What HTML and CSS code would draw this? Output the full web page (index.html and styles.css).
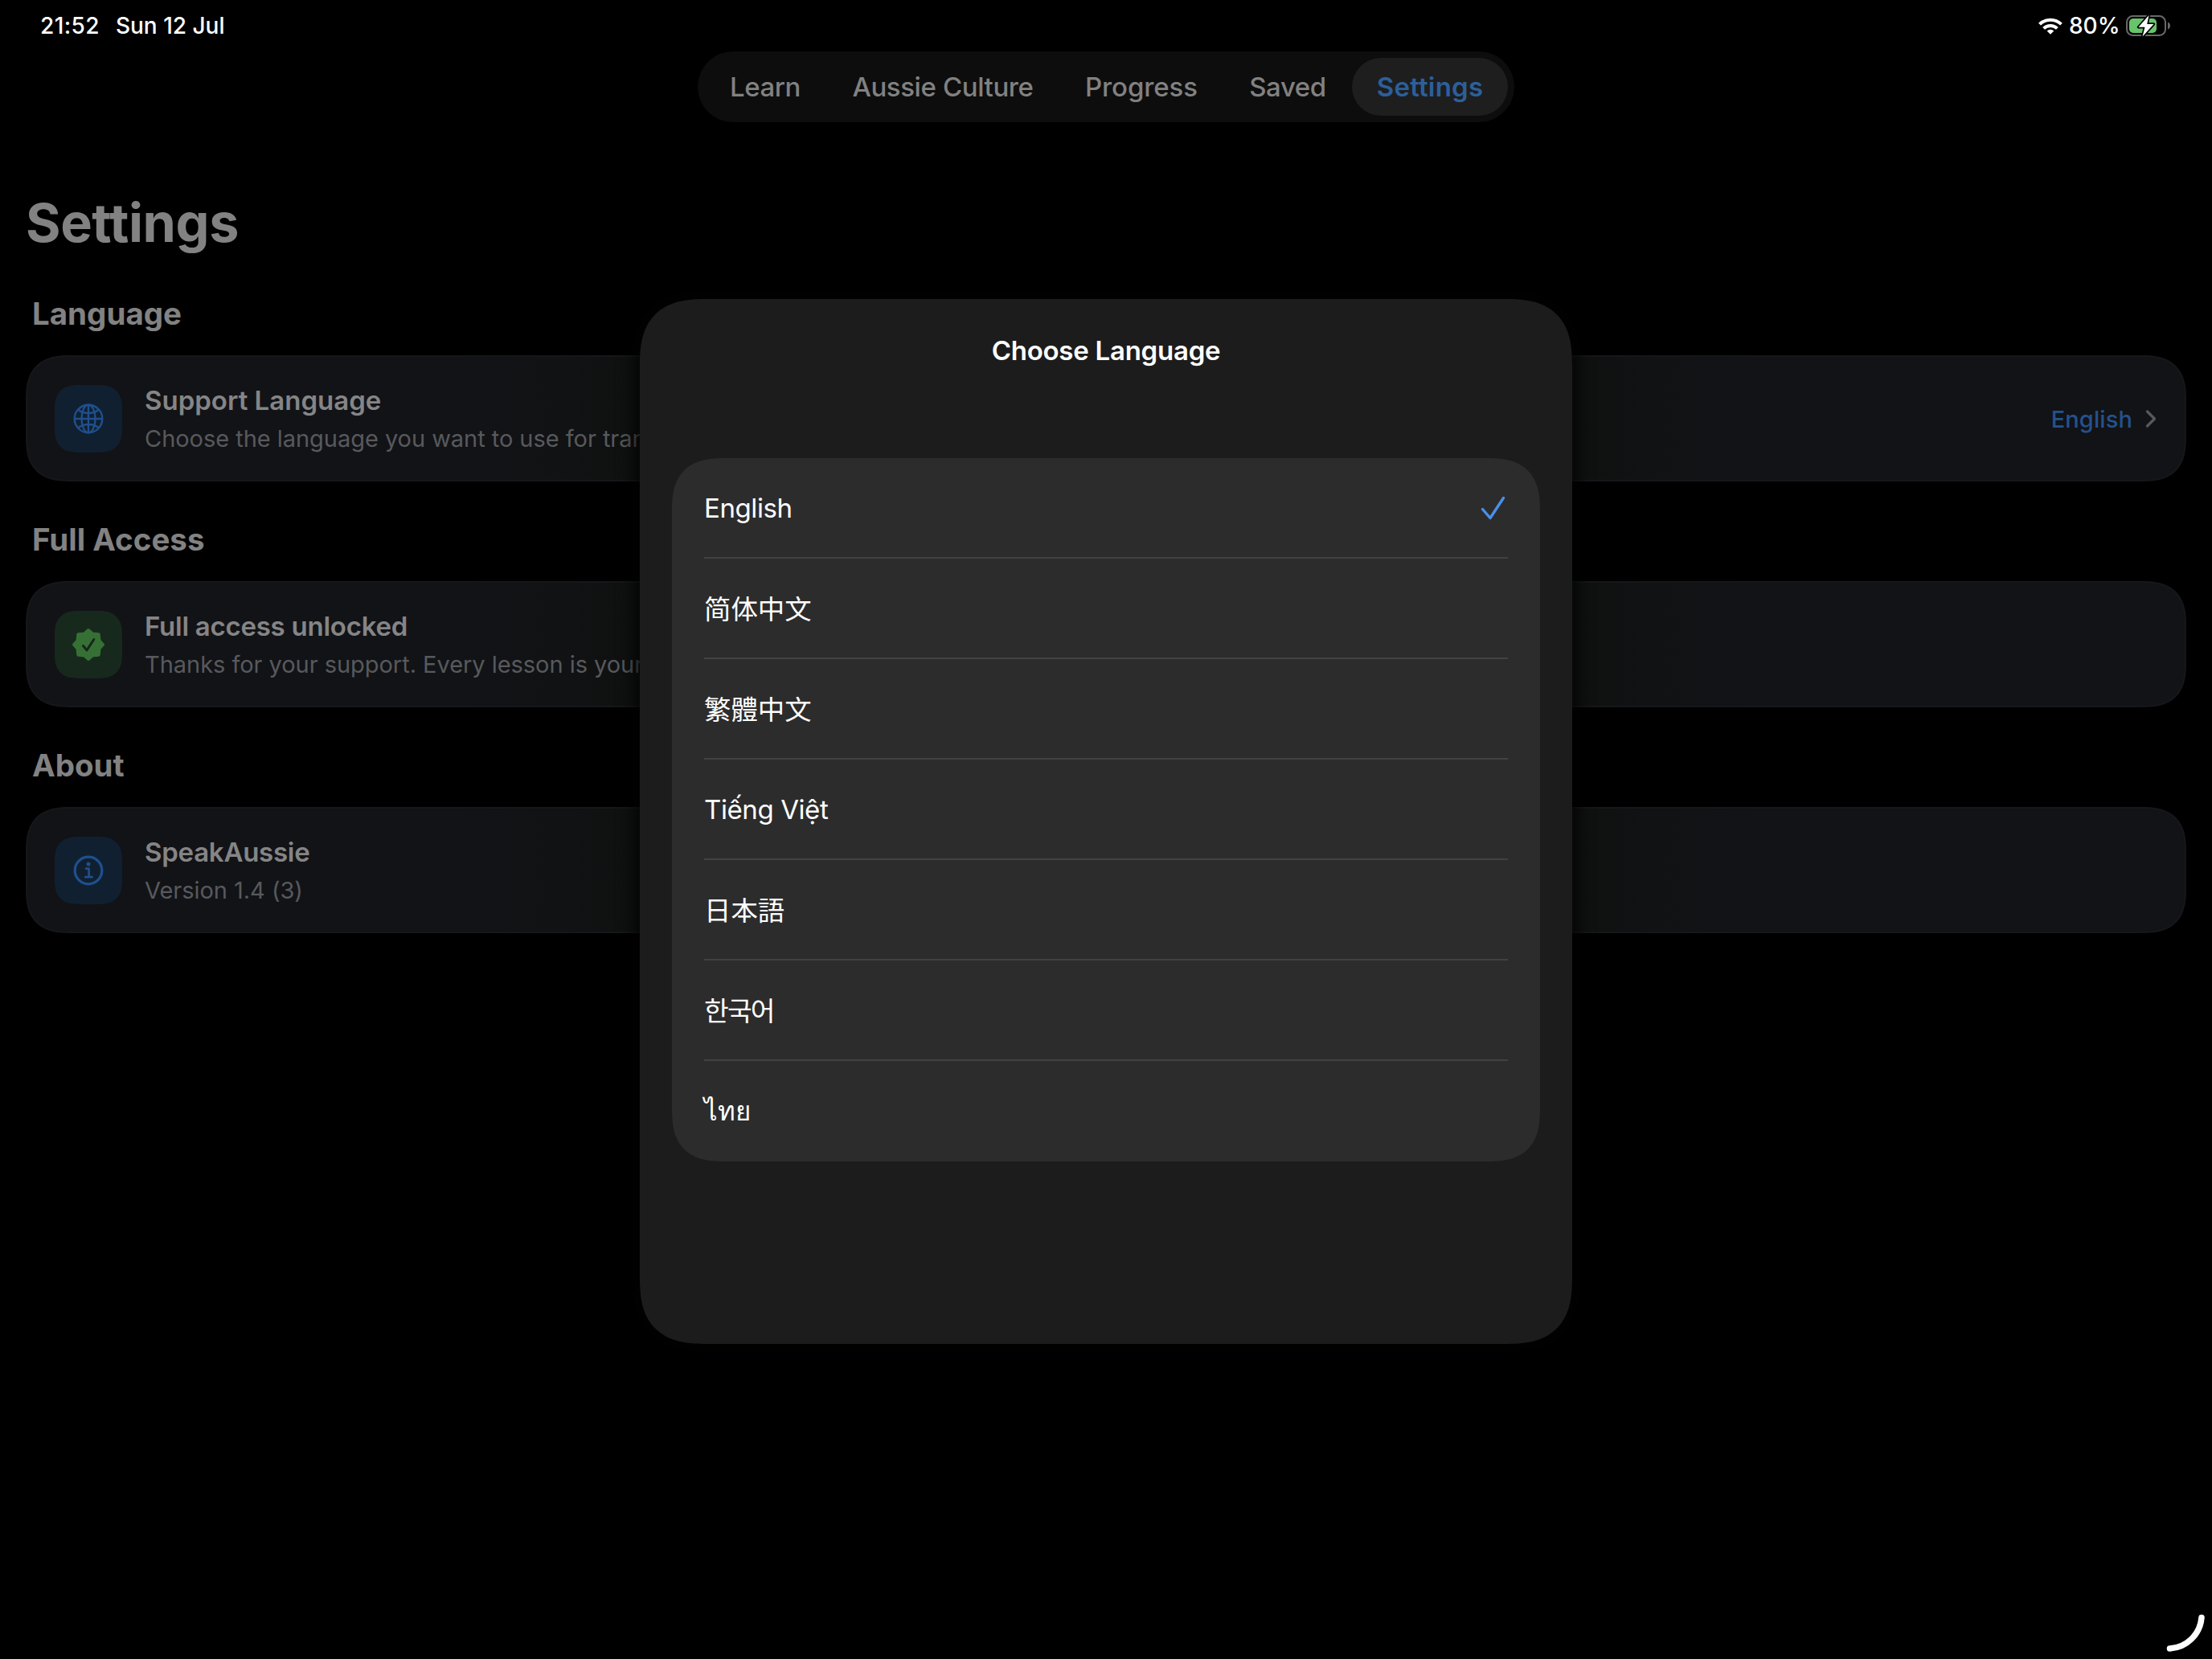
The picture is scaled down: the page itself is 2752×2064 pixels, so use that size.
FILE: index.html
```html
<!DOCTYPE html>
<html lang="en">
<head>
<meta charset="utf-8">
<title>Settings</title>
<link rel="stylesheet" href="styles.css">
</head>
<body>
<div class="screen">
  <header class="status">
    <div class="status-left"><span class="time">21:52</span><span>Sun 12 Jul</span></div>
    <div class="status-right">
      <svg class="wifi" viewBox="0 0 30 21" width="30" height="21">
        <g fill="none" stroke="#fff" stroke-width="4">
          <path d="M1.5 8.2a19.2 19.2 0 0 1 27 0"/>
          <path d="M6.6 13.4a11.9 11.9 0 0 1 16.8 0"/>
        </g>
        <path fill="#fff" d="M15 20.8l-4.3-4.3a6.1 6.1 0 0 1 8.6 0z"/>
      </svg>
      <span>80%</span>
      <svg class="battery" viewBox="0 0 56 28" width="56" height="28">
        <rect x="1" y="2" width="48" height="24" rx="7.5" fill="none" stroke="#69696b" stroke-width="2"/>
        <path d="M52 9.5c2 .8 3 2.4 3 4.500s-1 3.700-3 4.500z" fill="#69696b"/>
        <rect x="4" y="5" width="34" height="18" rx="5" fill="#67c46b"/>
        <path d="M28.5 1L15.500 15.800h8L20.500 27.500 34.500 12h-8.300z" fill="#fff" stroke="#000" stroke-width="3.4" stroke-linejoin="round" paint-order="stroke"/>
      </svg>
    </div>
  </header>

  <nav class="tabs">
    <a class="tab">Learn</a>
    <a class="tab">Aussie Culture</a>
    <a class="tab tab-wide">Progress</a>
    <a class="tab">Saved</a>
    <a class="tab tab-active">Settings</a>
  </nav>

  <main class="content">
    <h1 class="title">Settings</h1>

    <section class="group">
      <h2 class="heading">Language</h2>
      <div class="card">
        <div class="tile tile-blue">
          <svg viewBox="0 0 38 38" width="38" height="38" fill="none" stroke="#1f4f8c" stroke-width="2.4">
            <circle cx="19" cy="19" r="17.3"/>
            <ellipse cx="19" cy="19" rx="8.5" ry="17.3"/>
            <path d="M19 1.7v34.6M1.7 19h34.6M6 7.5c3.500 3 8 4.500 13 4.500s9.500-1.500 13-4.500M6 30.500c3.500-3 8-4.500 13-4.500s9.500 1.500 13 4.500"/>
          </svg>
        </div>
        <div class="text">
          <div class="name name-wide">Support Language</div>
          <div class="sub">Choose the language you want to use for translations.</div>
        </div>
        <div class="value">English</div>
        <svg class="chevron" viewBox="0 0 14 24" width="14" height="24"><path d="M2.5 3l9 9-9 9" fill="none" stroke="#58595c" stroke-width="3.2" stroke-linecap="round" stroke-linejoin="round"/></svg>
      </div>
    </section>

    <section class="group">
      <h2 class="heading">Full Access</h2>
      <div class="card">
        <div class="tile tile-green">
          <svg viewBox="-21 -21 42 42" width="42" height="42">
            <path fill="#367035" stroke="#367035" stroke-width="4" stroke-linejoin="round" d="M0-18L5-13.500 12.700-12.700 13.500-5 18 0 13.500 5 12.700 12.700 5 13.500 0 18-5 13.500-12.700 12.700-13.500 5-18 0-13.500-5-12.700-12.700-5-13.500z"/>
            <path d="M-6.500 1.500L-2 7 6.800-6.500" fill="none" stroke="#17271b" stroke-width="3" stroke-linecap="round" stroke-linejoin="round"/>
          </svg>
        </div>
        <div class="text">
          <div class="name">Full access unlocked</div>
          <div class="sub">Thanks for your support. Every lesson is yours.</div>
        </div>
      </div>
    </section>

    <section class="group">
      <h2 class="heading">About</h2>
      <div class="card">
        <div class="tile tile-blue">
          <svg viewBox="0 0 38 38" width="38" height="38" fill="none" stroke="#1f4f8c">
            <circle cx="19" cy="19" r="16.8" stroke-width="3.3"/>
            <circle cx="19" cy="11" r="2.5" fill="#1f4f8c" stroke="none"/>
            <path d="M16 16.700h3.600V27M15.200 27.200h8.400" stroke-width="2.7" stroke-linecap="round" stroke-linejoin="round"/>
          </svg>
        </div>
        <div class="text">
          <div class="name">SpeakAussie</div>
          <div class="sub">Version 1.4 (3)</div>
        </div>
      </div>
    </section>
  </main>

  <div class="sheet">
    <div class="sheet-title">Choose Language</div>
    <ul class="list">
      <li class="row">English
        <svg class="check" viewBox="0 0 34 34" width="34" height="34"><path d="M3.500 18.500L13 29.500 29.500 4.500" fill="none" stroke="#4a8fe8" stroke-width="3.400" stroke-linecap="round" stroke-linejoin="round"/></svg>
      </li>
      <li class="row"><span class="cjk sc" lang="zh-Hans">简体中文</span></li>
      <li class="row"><span class="cjk tc" lang="zh-Hant">繁體中文</span></li>
      <li class="row"><span lang="vi">Tiếng Việt</span></li>
      <li class="row"><span class="cjk ja" lang="ja">日本語</span></li>
      <li class="row"><span class="cjk ko" lang="ko">한국어</span></li>
      <li class="row"><span class="th" lang="th">ไทย</span></li>
    </ul>
  </div>

  <svg class="corner" viewBox="0 0 52 52" width="52" height="52"><path d="M46 6.500A42 42 0 0 1 6.500 45" fill="none" stroke="#fff" stroke-width="7.5" stroke-linecap="round"/></svg>
</div>
</body>
</html>
```
FILE: styles.css
```css
* { box-sizing: border-box; margin: 0; padding: 0; }

body {
  background: #000;
  color: #fff;
  font-family: Inter, "Noto Sans CJK SC", sans-serif;
}

.screen {
  position: relative;
  width: 2752px;
  height: 2064px;
  overflow: hidden;
}

/* status bar */
.status {
  display: flex;
  justify-content: space-between;
  align-items: center;
  height: 64px;
  padding: 0 51px 0 50px;
  font-size: 28px;
  font-weight: 500;
  line-height: 64px;
}
.status-left { display: flex; gap: 20px; }
.time { letter-spacing: 0.4px; }
.status-right { display: flex; align-items: center; }
.wifi { margin-right: 8px; }
.battery { margin-left: 7.5px; }

/* tab bar */
.tabs {
  display: grid;
  grid-template-columns: 152px 290px 204px 160px 194px;
  width: 1016px;
  height: 88px;
  margin: 0 auto;
  padding: 8px;
  border-radius: 44px;
  background: #0d0d0d;
}
.tab {
  display: flex;
  align-items: center;
  justify-content: center;
  border-radius: 36px;
  color: #818181;
  font-size: 33px;
  font-weight: 500;
  letter-spacing: -0.4px;
}
.tab-wide { letter-spacing: -0.1px; }
.tab-active {
  background: #1e1e1e;
  color: #2c5f9b;
  font-weight: 600;
  letter-spacing: 0.2px;
}

/* page */
.content { padding: 85px 32px 0; }
.title {
  font-size: 66.5px;
  font-weight: 700;
  line-height: 80px;
  letter-spacing: -0.4px;
  color: #828282;
  margin-bottom: 49px;
}
.group { margin-bottom: 48px; }
.heading {
  padding-left: 8px;
  margin-bottom: 28px;
  font-size: 38.5px;
  font-weight: 700;
  line-height: 48px;
  letter-spacing: 0;
  color: #828282;
}
.card {
  display: flex;
  align-items: center;
  height: 157px;
  padding: 0 35px 0 34px;
  border: 2px solid #16171a;
  border-radius: 44px;
  background: linear-gradient(90deg, #121317 540px, #101213 680px, #0f1110 764px, #0f1110 1924px, #101213 2008px, #121317 2148px);
}
.tile {
  display: flex;
  align-items: center;
  justify-content: center;
  flex: none;
  width: 84px;
  height: 84px;
  margin-right: 28px;
  border-radius: 24px;
}
.tile-blue { background: #112030; }
.tile-green { background: #17291d; }
.text { flex: 1; padding-top: 2px; }
.name {
  font-size: 33px;
  font-weight: 600;
  line-height: 48px;
  letter-spacing: -0.25px;
  color: #858586;
}
.name-wide { letter-spacing: 0; }
.sub {
  font-size: 29px;
  line-height: 47px;
  letter-spacing: -0.04px;
  color: #58595c;
  white-space: nowrap;
}
.value {
  padding-top: 2px;
  font-size: 29px;
  font-weight: 500;
  letter-spacing: 0.1px;
  color: #24528c;
}
.chevron { margin-left: 16px; }

/* language sheet */
.sheet {
  position: absolute;
  left: 796px;
  top: 372px;
  width: 1160px;
  height: 1300px;
  padding: 0 40px;
  border-radius: 66px;
  background: #1c1c1c;
  box-shadow: 0 0 24px 4px #020300;
}
.sheet-title {
  height: 198px;
  padding-top: 40px;
  text-align: center;
  font-size: 33px;
  font-weight: 600;
  line-height: 48px;
  letter-spacing: -0.25px;
}
.list {
  list-style: none;
  padding: 0 40px;
  border-radius: 50px;
  background: #2c2c2c;
}
.row {
  display: flex;
  align-items: center;
  justify-content: space-between;
  height: 125px;
  border-bottom: 2px solid #424243;
  font-size: 33px;
  letter-spacing: -0.4px;
}
.row:last-child { border-bottom: 0; }
.check { margin: 1px 1.5px 0 0; }
.cjk {
  padding-bottom: 3px;
  font-size: 33.4px;
  letter-spacing: 0;
}
.sc { font-family: "Noto Sans CJK SC", sans-serif; }
.tc { font-family: "Noto Sans CJK TC", sans-serif; }
.ja { font-family: "Noto Sans CJK JP", sans-serif; }
.ko { font-family: "Noto Sans CJK KR", sans-serif; letter-spacing: -1.8px; }
.th { letter-spacing: 0; }

/* continuous corners where the browser can draw them */
@supports (corner-shape: superellipse(1.4)) {
  .sheet { border-radius: 83px; corner-shape: superellipse(1.4); }
  .list { border-radius: 66px; corner-shape: superellipse(1.4); }
  .card { border-radius: 56px; corner-shape: superellipse(1.4); }
  .tile { border-radius: 31px; corner-shape: superellipse(1.4); }
}

.corner { position: absolute; right: 7px; bottom: 6px; }
```
